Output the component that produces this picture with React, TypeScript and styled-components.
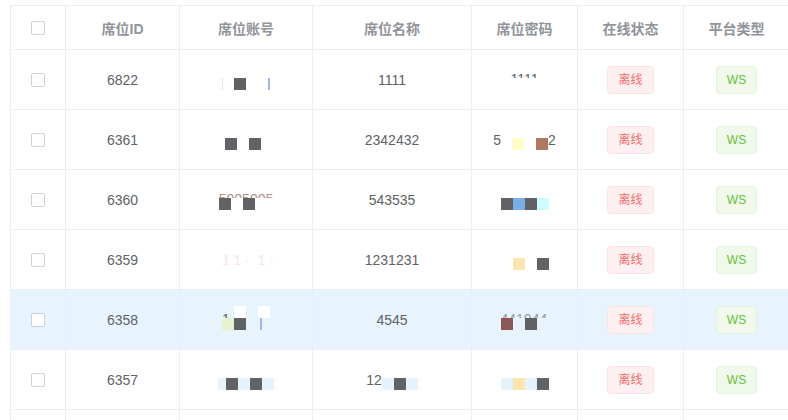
import React from 'react';
import styled, { createGlobalStyle } from 'styled-components';

const GlobalStyle = createGlobalStyle`
  html, body {
    margin: 0;
    padding: 0;
    background: #ffffff;
    overflow: hidden;
  }
  body {
    width: 788px;
    height: 420px;
    font-family: 'Liberation Sans', 'Noto Sans CJK SC', sans-serif;
    font-size: 14px;
    color: #606266;
  }
`;

const TableWrap = styled.div`
  margin: 5px 0 0 10px;
  width: 780px;
  border-top: 1px solid #ebeef5;
  border-left: 1px solid #ebeef5;
`;

const Row = styled.div<{ $head?: boolean; $current?: boolean }>`
  display: grid;
  grid-template-columns: 55px 114px 133px 159px 106px 106px 106px;
  height: ${(p) => (p.$head ? '44px' : '60px')};
  box-sizing: border-box;
  border-bottom: 1px solid #ebeef5;
  background: ${(p) => (p.$current ? '#e8f4fd' : '#ffffff')};
`;

const Cell = styled.div`
  display: flex;
  align-items: center;
  justify-content: center;
  border-right: 1px solid #ebeef5;
  overflow: hidden;
`;

const HeadCell = styled(Cell)`
  color: #909399;
  font-weight: 700;
  font-size: 14px;
`;

const Checkbox = styled.span`
  display: inline-block;
  width: 14px;
  height: 14px;
  box-sizing: border-box;
  border: 1px solid #cdd0d8;
  border-radius: 2px;
  background: #ffffff;
`;

const Tag = styled.span<{ $type: 'danger' | 'success' }>`
  display: inline-block;
  height: 28px;
  line-height: 26px;
  padding: 0 10px;
  box-sizing: border-box;
  font-size: 12px;
  border-radius: 4px;
  border: 1px solid ${(p) => (p.$type === 'danger' ? '#fde2e2' : '#e1f3d8')};
  background: ${(p) => (p.$type === 'danger' ? '#fef0f0' : '#f0f9eb')};
  color: ${(p) => (p.$type === 'danger' ? '#f56c6c' : '#67c23a')};
`;

// masked (pixelated) values
const Mask = styled.span`
  display: inline-flex;
  flex-direction: column;
  align-items: flex-start;
`;

const MaskTop = styled.span`
  display: flex;
  align-items: flex-start;
  height: 12px;
  overflow: hidden;
`;

const MaskLine = styled.span`
  display: flex;
  align-items: flex-start;
  height: 12px;
`;

const MaskBottom = styled.span`
  display: block;
  height: 4px;
`;

const Block = styled.span<{ $w: number; $c?: string }>`
  flex: none;
  display: inline-block;
  width: ${(p) => p.$w}px;
  height: 12px;
  background: ${(p) => p.$c || 'transparent'};
`;

const LineText = styled.span<{ $c?: string }>`
  flex: none;
  line-height: 14px;
  margin-top: -5px;
  color: ${(p) => p.$c || '#606266'};
  white-space: pre;
`;

const TopText = styled.span<{ $c?: string }>`
  flex: none;
  line-height: 14px;
  padding-top: 6px;
  color: ${(p) => p.$c || '#606266'};
  white-space: pre;
`;

type Item = { w?: number; c?: string; t?: string };

const G = '#606266';
const LB = '#e6f3fd';

function Masked({ top = [], line = [] }: { top?: Item[]; line?: Item[] }) {
  const render = (items: Item[], Text: typeof LineText) =>
    items.map((it, i) =>
      it.t !== undefined ? (
        <Text key={i} $c={it.c}>
          {it.t}
        </Text>
      ) : (
        <Block key={i} $w={it.w || 12} $c={it.c} />
      ),
    );
  return (
    <Mask>
      <MaskTop>{render(top, TopText)}</MaskTop>
      <MaskLine>{render(line, LineText)}</MaskLine>
      <MaskBottom />
    </Mask>
  );
}

type MaskData = { top?: Item[]; line?: Item[] };

type RowData = {
  id: string;
  account: MaskData;
  name: MaskData | string;
  pwd: MaskData;
};

const rows: RowData[] = [
  {
    id: '6822',
    account: {
      line: [{ w: 1, c: '#dfe6f2' }, { w: 11 }, { c: G }, { w: 22 }, { w: 2, c: '#9fb6e6' }],
    },
    name: '1111',
    pwd: { top: [{ t: '1111' }], line: [] },
  },
  {
    id: '6361',
    account: { line: [{ c: G }, { w: 12 }, { c: G }, { w: 7 }] },
    name: '2342432',
    pwd: {
      line: [{ t: '5' }, { w: 11 }, { c: '#ffffcc' }, { w: 12 }, { c: '#b07860' }, { t: '2' }],
    },
  },
  {
    id: '6360',
    account: {
      top: [{ t: '5005005', c: '#b09080' }],
      line: [{ c: G }, { w: 12 }, { c: G }, { w: 12 }],
    },
    name: '543535',
    pwd: { line: [{ c: G }, { c: '#78b0e6' }, { c: G }, { c: '#ccffff' }] },
  },
  {
    id: '6359',
    account: {
      line: [{ w: 4 }, { t: '1 1 ·  1 ·', c: '#f6e6e8' }],
    },
    name: '1231231',
    pwd: { line: [{ w: 12 }, { c: '#fde4b0' }, { w: 12 }, { c: G }] },
  },
  {
    id: '6358',
    account: {
      top: [{ t: '1' }, { w: 4 }, { c: '#ffffff' }, { w: 12 }, { c: '#ffffff' }],
      line: [{ c: '#e8f2d0' }, { c: G }, { w: 14 }, { w: 2, c: '#9fb6e6' }],
    },
    name: '4545',
    pwd: {
      top: [{ t: '441044', c: '#9a9aa0' }],
      line: [{ c: '#8a5a5a' }, { w: 12 }, { c: G }, { w: 12 }],
    },
  },
  {
    id: '6357',
    account: { line: [{ w: 8, c: LB }, { c: G }, { c: LB }, { c: G }, { c: LB }] },
    name: { line: [{ t: '12' }, { c: LB }, { c: G }, { c: LB }] },
    pwd: { line: [{ c: LB }, { c: '#fde5b0' }, { c: LB }, { c: G }] },
  },
  {
    id: '6356',
    account: { line: [] },
    name: '1',
    pwd: { line: [] },
  },
];

const headers = ['席位ID', '席位账号', '席位名称', '席位密码', '在线状态', '平台类型'];

export default function App() {
  return (
    <>
      <GlobalStyle />
      <TableWrap>
        <Row $head>
          <HeadCell>
            <Checkbox />
          </HeadCell>
          {headers.map((h) => (
            <HeadCell key={h}>{h}</HeadCell>
          ))}
        </Row>
        {rows.map((r) => (
          <Row key={r.id} $current={r.id === '6358'}>
            <Cell>
              <Checkbox />
            </Cell>
            <Cell>{r.id}</Cell>
            <Cell>
              <Masked {...r.account} />
            </Cell>
            <Cell>{typeof r.name === 'string' ? r.name : <Masked {...r.name} />}</Cell>
            <Cell>
              <Masked {...r.pwd} />
            </Cell>
            <Cell>
              <Tag $type="danger">离线</Tag>
            </Cell>
            <Cell>
              <Tag $type="success">WS</Tag>
            </Cell>
          </Row>
        ))}
      </TableWrap>
    </>
  );
}
